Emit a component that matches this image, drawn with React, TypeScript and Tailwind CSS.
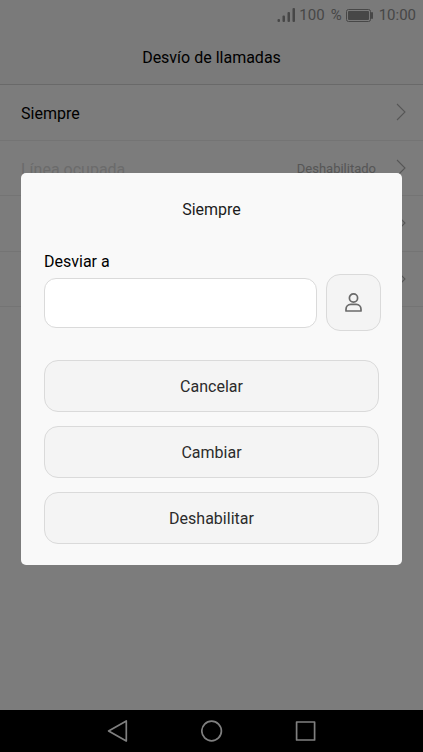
import { useState } from 'react';

interface ForwardingOption {
    id: string;
    label: string;
    status: string;
    disabled: boolean;
}

const OPTIONS: ForwardingOption[] = [
    { id: 'always', label: 'Siempre', status: '', disabled: false },
    { id: 'busy', label: 'Línea ocupada', status: 'Deshabilitado', disabled: true },
    { id: 'unanswered', label: '', status: '', disabled: true },
    { id: 'unreachable', label: '', status: '', disabled: true },
];

const ACTIONS = ['Cancelar', 'Cambiar', 'Deshabilitar'];

function StatusBar() {
    return (
        <div className="flex h-[30px] items-center justify-end pr-[7px] text-[15px] leading-5 text-[#8e8e8e]">
            <svg width="18" height="14" viewBox="0 0 18 14" fill="currentColor" aria-hidden="true">
                <rect x="0.5" y="11" width="2.5" height="3" rx="1" />
                <rect x="5.5" y="7.5" width="2.5" height="6.5" rx="1" />
                <rect x="10.5" y="4" width="2.5" height="10" rx="1" />
                <rect x="15.5" y="0" width="2.5" height="14" rx="1" />
            </svg>
            <span className="ml-1">100</span>
            <span className="ml-1.5">%</span>
            <svg className="ml-1" width="27" height="13" viewBox="0 0 27 13" aria-hidden="true">
                <rect x="0.5" y="0.5" width="24" height="12" rx="2" fill="none" stroke="currentColor" />
                <rect x="2" y="2" width="21" height="9" rx="1" fill="currentColor" />
                <rect x="25" y="3" width="2" height="7" rx="1" fill="currentColor" />
            </svg>
            <span className="ml-1.5">10:00</span>
        </div>
    );
}

function Chevron() {
    return (
        <svg width="10" height="18" viewBox="0 0 10 18" fill="none" stroke="currentColor" strokeWidth="1.1" aria-hidden="true">
            <path d="M1 1l8 8-8 8" />
        </svg>
    );
}

function OptionRow({ option }: { option: ForwardingOption }) {
    return (
        <li className="border-b border-[#e8e8e8]">
            <button type="button" className="flex h-full w-full items-center pr-[17px] pl-[21px] text-left">
                <span className={option.disabled ? 'flex-1 pt-1 text-[#d6d6d6]' : 'flex-1 pt-1 text-black'}>{option.label}</span>
                <span className="mr-5 pt-0.5 text-[13px] text-[#acacac]">{option.status}</span>
                <span className="text-[#acacac]">
                    <Chevron />
                </span>
            </button>
        </li>
    );
}

function ForwardDialog() {
    const [number, setNumber] = useState('');

    return (
        <div className="fixed inset-0 flex items-center justify-center bg-black/50 px-[21px] pb-3.5">
            <div
                role="dialog"
                aria-modal="true"
                aria-labelledby="dialog-title"
                className="w-full rounded-[5px] bg-[#f9f9f9] px-[23px] pt-[25px] pb-[21px]"
            >
                <h2 id="dialog-title" className="text-center text-[#1c1c1c]">Siempre</h2>

                <label htmlFor="forward-number" className="mt-7 block text-black">Desviar a</label>
                <div className="-mr-0.5 flex items-center gap-[9px]">
                    <input
                        id="forward-number"
                        type="tel"
                        value={number}
                        onChange={e => setNumber(e.target.value)}
                        className="h-[50px] min-w-0 flex-1 rounded-xl border border-[#dadada] bg-white px-3"
                    />
                    <button
                        type="button"
                        aria-label="Contactos"
                        className="flex h-[57px] w-[55px] items-center justify-center rounded-[14px] border border-[#dadada] bg-[#f4f4f4]"
                    >
                        <svg width="17" height="19" viewBox="0 0 17 19" fill="none" stroke="#6a6a6a" strokeWidth="1.7" strokeLinejoin="round" aria-hidden="true">
                            <circle cx="8.5" cy="5" r="4.1" />
                            <path d="M1 18V16.2C1 13.4 3 11.4 5.8 11.4h5.4c2.8 0 4.8 2 4.8 4.8V18z" />
                        </svg>
                    </button>
                </div>

                <div className="mt-[29px] flex flex-col gap-3.5">
                    {ACTIONS.map(action => (
                        <button
                            key={action}
                            type="button"
                            className="h-[52px] rounded-[14px] border border-[#dadada] bg-[#f4f4f4] pt-0.5 text-[#2b2b2b]"
                        >
                            {action}
                        </button>
                    ))}
                </div>
            </div>
        </div>
    );
}

function NavBar() {
    return (
        <nav className="flex h-[42px] items-center justify-center bg-black text-white">
            <button type="button" aria-label="Atrás" className="flex w-[94px] justify-center">
                <svg width="22" height="22" viewBox="0 0 22 22" fill="none" stroke="currentColor" strokeWidth="1.7" strokeLinejoin="round" aria-hidden="true">
                    <path d="M19.3 1v20L1.6 11z" />
                </svg>
            </button>
            <button type="button" aria-label="Inicio" className="flex w-[94px] justify-center">
                <svg width="22" height="22" viewBox="0 0 22 22" fill="none" stroke="currentColor" strokeWidth="1.7" aria-hidden="true">
                    <circle cx="10.6" cy="11" r="9.8" />
                </svg>
            </button>
            <button type="button" aria-label="Recientes" className="flex w-[94px] justify-center">
                <svg width="22" height="22" viewBox="0 0 22 22" fill="none" stroke="currentColor" strokeWidth="1.7" strokeLinejoin="round" aria-hidden="true">
                    <rect x="1.6" y="2" width="18" height="18" />
                </svg>
            </button>
        </nav>
    );
}

export default function App() {
    return (
        <div className="flex min-h-screen flex-col bg-[#f9f9f9] font-[Roboto,sans-serif] text-base leading-6">
            <header className="border-b border-[#d2d2d2] bg-[#f4f4f4]">
                <StatusBar />
                <h1 className="pt-4 pb-3.5 text-center text-black">Desvío de llamadas</h1>
            </header>
            <main className="flex-1">
                <ul className="grid min-h-[222px] grid-rows-4">
                    {OPTIONS.map(option => (
                        <OptionRow key={option.id} option={option} />
                    ))}
                </ul>
            </main>
            <NavBar />
            <ForwardDialog />
        </div>
    );
}
